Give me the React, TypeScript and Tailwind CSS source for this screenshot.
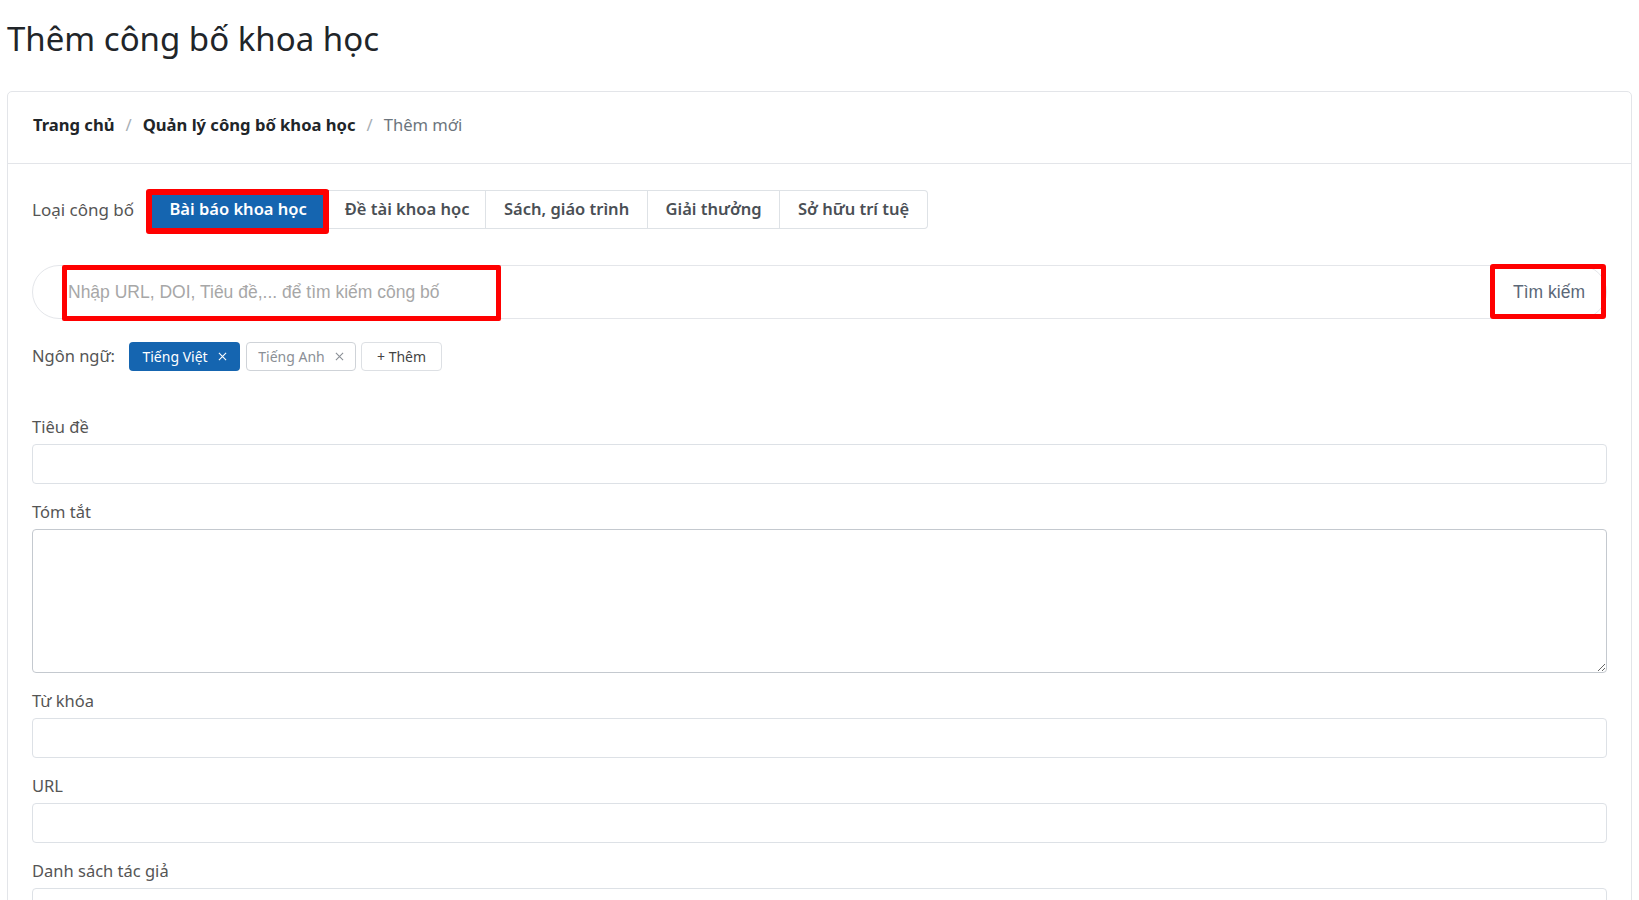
import { useState } from 'react';

const tabs = [
  { id: 'article', label: 'Bài báo khoa học', width: 'w-[182px]' },
  { id: 'project', label: 'Đề tài khoa học', width: 'w-[157px]' },
  { id: 'book', label: 'Sách, giáo trình', width: 'w-[162px]' },
  { id: 'award', label: 'Giải thưởng', width: 'w-[132px]' },
  { id: 'ip', label: 'Sở hữu trí tuệ', width: 'w-[148px]' },
];

function CloseIcon({ className }: { className?: string }) {
  return (
    <svg viewBox="0 0 10 10" className={className} fill="none" stroke="currentColor" strokeWidth="1.2">
      <path d="M1 1L9 9M9 1L1 9" />
    </svg>
  );
}

function Field({ label, children }: { label: string; children: React.ReactNode }) {
  return (
    <div className="mb-[16px]">
      <label className="mb-[5px] block text-[16.5px] leading-[24px] text-[#555]">{label}</label>
      {children}
    </div>
  );
}

export default function App() {
  const [activeTab, setActiveTab] = useState('article');
  const [query, setQuery] = useState('');

  const inputClass =
    'block h-[40px] w-full rounded-[4px] border border-[#dde1e6] bg-white px-3 text-[16px] outline-none';

  return (
    <div className="h-[900px] overflow-hidden bg-white px-[7px] font-['Noto_Sans',sans-serif] text-[#212529]">
      <h1 className="pt-[19px] text-[33px] leading-[40px] font-normal">Thêm công bố khoa học</h1>

      <div className="mt-[32px] rounded-[5px] border border-[#e3e5e9]">
        {/* breadcrumb */}
        <div className="flex items-center border-b border-[#e3e5e9] px-[25px] pt-[21px] pb-[26px] text-[16.6px] leading-[24px]">
          <span className="font-bold text-[#212529]">Trang chủ</span>
          <span className="mx-[11px] text-[#a8aeb4]">/</span>
          <span className="font-bold text-[#212529]">Quản lý công bố khoa học</span>
          <span className="mx-[11px] text-[#a8aeb4]">/</span>
          <span className="text-[#6c757d]">Thêm mới</span>
        </div>

        <div className="px-[24px] pt-[26px]">
          {/* loại công bố */}
          <div className="flex items-center">
            <span className="mr-[13px] text-[17px] text-[#555]">Loại công bố</span>
            <div className="flex">
              {tabs.map((tab, i) => {
                const active = tab.id === activeTab;
                return (
                  <button
                    key={tab.id}
                    onClick={() => setActiveTab(tab.id)}
                    className={`relative flex h-[39px] items-center justify-center text-[16.5px] font-semibold ${tab.width} ${
                      active
                        ? 'border border-[#1565b0] bg-[#1565b0] text-white'
                        : 'border-y border-r border-[#dee2e6] bg-white text-[#4a4f55]'
                    } ${i === 0 ? 'rounded-l-[4px]' : ''} ${i === tabs.length - 1 ? 'rounded-r-[4px]' : ''}`}
                  >
                    {tab.label}
                    {i === 0 && (
                      <span className="pointer-events-none absolute -top-[2px] -left-[2px] -right-px -bottom-[6px] rounded-[3px] border-[6px] border-[#ff0000]" />
                    )}
                  </button>
                );
              })}
            </div>
          </div>

          {/* search */}
          <div className="relative mt-[36px] flex h-[54px] items-center rounded-full border border-[#e4e6ea]">
            <input
              value={query}
              onChange={(e) => setQuery(e.target.value)}
              placeholder="Nhập URL, DOI, Tiêu đề,... để tìm kiếm công bố"
              className="h-full flex-1 bg-transparent pl-[35px] font-['Liberation_Sans',Arial,sans-serif] text-[17.5px] outline-none placeholder:text-[#a7a7a7]"
            />
            <span className="pointer-events-none absolute -top-px left-[29px] h-[56px] w-[439px] rounded-[2px] border-[5px] border-[#ff0000]" />
            <button className="relative h-full px-[21px] font-['Liberation_Sans',Arial,sans-serif] text-[17.5px] text-[#5c6878]">
              Tìm kiếm
              <span className="pointer-events-none absolute -top-[2px] -left-[2px] right-0 -bottom-px rounded-[3px] border-[5px] border-[#ff0000]" />
            </button>
          </div>

          {/* ngôn ngữ */}
          <div className="mt-[23px] flex h-[29px] items-center">
            <span className="mr-[14px] text-[16.5px] text-[#555]">Ngôn ngữ:</span>
            <span className="flex h-[29px] w-[111px] items-center justify-center gap-[10px] rounded-[4px] bg-[#1565b0] text-[14px] text-white">
              Tiếng Việt
              <CloseIcon className="h-[9px] w-[9px]" />
            </span>
            <span className="ml-[6px] flex h-[29px] w-[110px] items-center justify-center gap-[10px] rounded-[4px] border border-[#cfd3d8] text-[14px] text-[#8a8f96]">
              Tiếng Anh
              <CloseIcon className="h-[9px] w-[9px]" />
            </span>
            <span className="ml-[5px] flex h-[29px] w-[81px] items-center justify-center rounded-[4px] border border-[#dde0e4] text-[14px] text-[#444]">
              + Thêm
            </span>
          </div>

          {/* form */}
          <div className="mt-[44px]">
            <Field label="Tiêu đề">
              <input className={inputClass} />
            </Field>
            <Field label="Tóm tắt">
              <textarea className="block h-[144px] w-full rounded-[4px] border border-[#c4c9cf] bg-white px-3 py-2 text-[16px] outline-none" />
            </Field>
            <Field label="Từ khóa">
              <input className={inputClass} />
            </Field>
            <Field label="URL">
              <input className={inputClass} />
            </Field>
            <Field label="Danh sách tác giả">
              <input className={inputClass} />
            </Field>
          </div>
        </div>
      </div>
    </div>
  );
}
